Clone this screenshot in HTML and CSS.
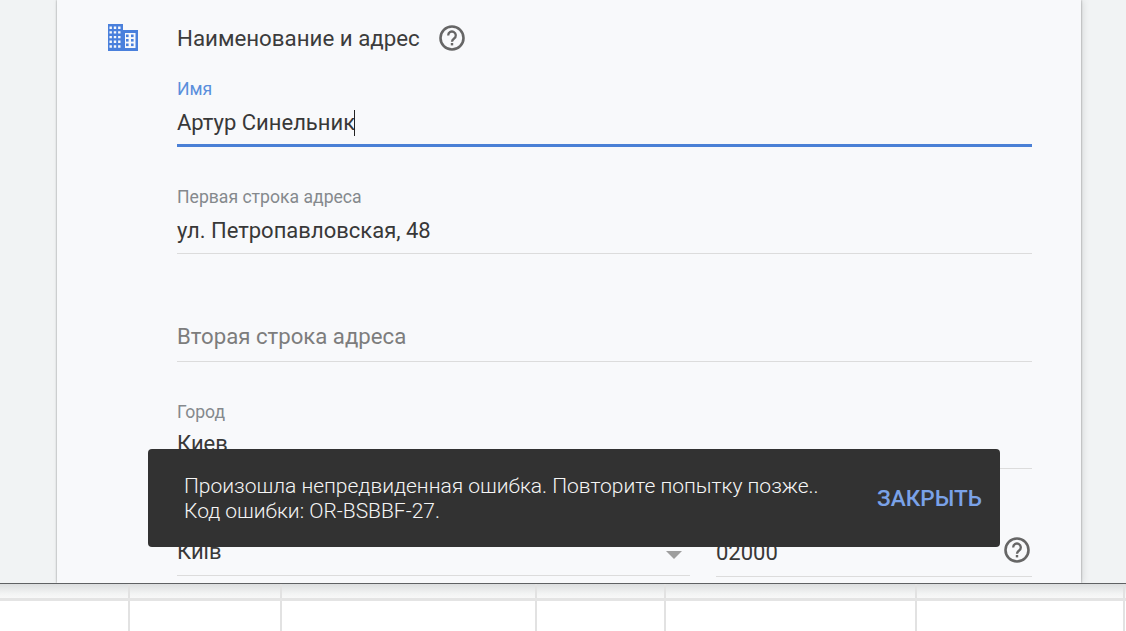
FILE: index.html
```html
<!DOCTYPE html>
<html lang="ru">
<head>
<meta charset="utf-8">
<title>Наименование и адрес</title>
<link rel="stylesheet" href="styles.css">
</head>
<body>
<div class="app">
  <main class="stage">
    <section class="card">
      <div class="side">
        <svg class="building" viewBox="0 0 30 27" aria-hidden="true">
          <path fill="#4a80dc" fill-rule="evenodd" d="M0 0h15v6h15v21H0zM1.5 2.5v2.4h2.4V2.5zM5.8 2.5v2.4h2.4V2.5zM10.1 2.5v2.4h2.4V2.5zM1.5 7.2v2.4h2.4V7.2zM5.8 7.2v2.4h2.4V7.2zM10.1 7.2v2.4h2.4V7.2zM1.5 11.9v2.4h2.4v-2.4zM5.8 11.9v2.4h2.4v-2.4zM10.1 11.9v2.4h2.4v-2.4zM1.5 16.6v2.4h2.4v-2.4zM5.8 16.6v2.4h2.4v-2.4zM10.1 16.6v2.4h2.4v-2.4zM17 9v15h10.5V9zM1.5 21.3v2.4h2.4v-2.4zM5.8 21.3v2.4h2.4v-2.4zM10.1 21.3v2.4h2.4v-2.4z"/>
          <g fill="#4a80dc">
            <rect x="18" y="10.5" width="2.6" height="2.6"/><rect x="23" y="10.5" width="2.6" height="2.6"/>
            <rect x="18" y="15" width="2.6" height="2.6"/><rect x="23" y="15" width="2.6" height="2.6"/>
            <rect x="18" y="19.5" width="2.6" height="2.6"/><rect x="23" y="19.5" width="2.6" height="2.6"/>
          </g>
        </svg>
      </div>
      <div class="form">
        <div class="heading">
          <span>Наименование и адрес</span>
          <svg class="help" viewBox="0 0 26 26" aria-hidden="true"><circle cx="13" cy="13" r="11.5" fill="none" stroke="#666" stroke-width="2.6"/><path d="M9.2 10.4a3.8 3.8 0 1 1 5.9 3.1c-1.4 1-2.1 1.5-2.1 3.2" fill="none" stroke="#666" stroke-width="2.3"/><rect x="11.8" y="18" width="2.4" height="2.4" fill="#666"/></svg>
        </div>
        <div class="field field-active">
          <div class="label label-active">Имя</div>
          <div class="value">Артур Синельник<span class="caret"></span></div>
        </div>
        <div class="field field-address">
          <div class="label">Первая строка адреса</div>
          <div class="value">ул. Петропавловская, 48</div>
        </div>
        <div class="field field-empty">
          <div class="value placeholder">Вторая строка адреса</div>
        </div>
        <div class="field field-city">
          <div class="label">Город</div>
          <div class="value">Киев</div>
        </div>
        <div class="pair">
          <div class="field region">
            <div class="value">Київ</div>
            <span class="arrow"></span>
          </div>
          <div class="field zip">
            <div class="value">02000</div>
            <svg class="help" viewBox="0 0 26 26" aria-hidden="true"><circle cx="13" cy="13" r="11.5" fill="none" stroke="#666" stroke-width="2.6"/><path d="M9.2 10.4a3.8 3.8 0 1 1 5.9 3.1c-1.4 1-2.1 1.5-2.1 3.2" fill="none" stroke="#666" stroke-width="2.3"/><rect x="11.8" y="18" width="2.4" height="2.4" fill="#666"/></svg>
          </div>
        </div>
      </div>
    </section>
  </main>
  <div class="sheet">
    <div class="sheet-head">
      <span class="c1"></span><span class="c2"></span><span class="c3"></span><span class="c4"></span><span class="c5"></span><span class="c6"></span><span class="c7"></span>
    </div>
    <div class="sheet-row">
      <span class="c1"></span><span class="c2"></span><span class="c3"></span><span class="c4"></span><span class="c5"></span><span class="c6"></span><span class="c7"></span>
    </div>
  </div>
  <div class="snackbar">
    <p class="message">Произошла непредвиденная ошибка. Повторите попытку позже..<br>Код ошибки: OR-BSBBF-27.</p>
    <span class="action">ЗАКРЫТЬ</span>
  </div>
</div>
</body>
</html>
```

FILE: styles.css
```css
* { box-sizing: border-box; }
html, body { margin: 0; height: 100%; overflow: hidden; }
body { font-family: Roboto, "Liberation Sans", sans-serif; background: #fff; color: #333; }
.app { position: relative; width: 1126px; height: 631px; display: flex; flex-direction: column; }
.stage { height: 584px; flex: none; background: #f1f3f4; border-bottom: 1px solid #5f6163; padding: 0 45px 0 57px; overflow: hidden; }
.card { height: 100%; display: flex; background: #f8f9fb; box-shadow: 0 0 2px rgba(0,0,0,.4), 2px 0 7px rgba(0,0,0,.1); overflow: hidden; }
.side { width: 120px; flex: none; padding: 24px 0 0 51px; }
.building { width: 30px; height: 27px; display: block; }
.form { width: 855px; flex: none; }
.heading { height: 76px; padding-top: 24px; display: flex; align-items: flex-start; gap: 19px; font-size: 22.3px; line-height: 28px; color: #3c3c3c; }
.help { width: 26px; height: 26px; flex: none; display: block; }
.heading .help { margin-top: 1px; }
.field { position: relative; border-bottom: 1px solid #dcdcdc; }
.label { font-size: 17.6px; line-height: 20px; color: #85898d; }
.label-active { color: #5a8fdc; }
.value { font-size: 22px; line-height: 30px; color: #383838; }
.placeholder { color: #7d7d7d; font-size: 22.2px; }
.caret { display: inline-block; width: 1px; height: 26px; background: #222; vertical-align: -6px; margin-left: -1px; }
.field-active { height: 71px; padding-top: 3px; border-bottom: 3px solid #4a80d6; }
.field-active .value { margin-top: 9px; }
.field-address { height: 107px; padding-top: 40px; }
.field-address .value { margin-top: 9px; }
.field-empty { height: 108px; padding-top: 67px; }
.field-city { height: 107px; padding-top: 40px; }
.field-city .value { margin-top: 7px; }
.pair { display: flex; gap: 26px; margin-top: 69px; }
.region { width: 513px; height: 38px; flex: none; }
.region .value { margin-top: -1px; }
.zip { flex: 1; height: 39px; }
.arrow { position: absolute; right: 8px; top: 13px; width: 0; height: 0; border-left: 8px solid transparent; border-right: 8px solid transparent; border-top: 8px solid #9e9e9e; }
.zip .help { position: absolute; right: 2px; top: -1px; }
.sheet { flex: 1; background: #fff; }
.sheet-head, .sheet-row { display: grid; grid-template-columns: 130px 152px 255px 129px 251px 208px 1fr; }
.sheet-head { height: 17px; background: linear-gradient(#dcdedf, #f3f4f4 70%, #f8f8f8); border-bottom: 3px solid #e4e4e4; }
.sheet-row { height: 30px; }
.sheet-head span, .sheet-row span { border-right: 2px solid #e2e2e2; }
.c7 { border-right: 0 !important; }
.snackbar { position: absolute; left: 148px; top: 449px; width: 852px; height: 98px; background: #323232; border-radius: 4px; display: flex; align-items: center; justify-content: space-between; padding: 0 18px 0 36px; }
.message { margin: 2px 0 0; font-size: 21px; line-height: 25px; color: #f5f5f5; font-weight: 300; }
.action { font-size: 22.6px; font-weight: 500; color: #7aa2e8; }
```
